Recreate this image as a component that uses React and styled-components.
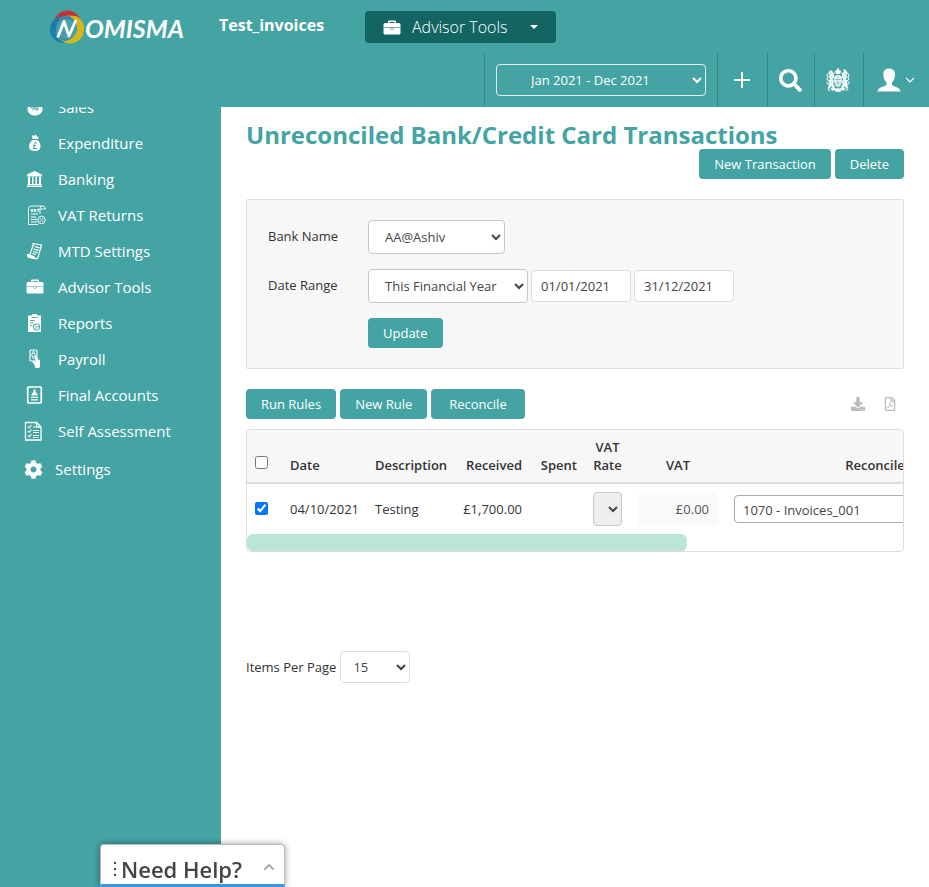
import React from 'react';
import styled, { createGlobalStyle } from 'styled-components';
import { FaDownload, FaRegFilePdf, FaChevronUp, FaCog, FaSearch } from 'react-icons/fa';

const teal = '#44a3a3';
const line = '#2f8c8c';

const GlobalStyle = createGlobalStyle`
  *, *::before, *::after { box-sizing: border-box; }
  body {
    margin: 0;
    background: #fff;
    color: #333;
    font: 13px/18px "Open Sans", sans-serif;
  }
  button, input, select { font: inherit; }
`;

const Page = styled.div`
  display: flex;
  flex-direction: column;
  height: 100vh;
`;

const Header = styled.header`
  flex: none;
  background: ${teal};
  color: #fff;
`;

const TopRow = styled.div`
  display: flex;
  align-items: center;
  height: 53px;
  padding-left: 48px;
`;

const LogoLink = styled.a`
  display: flex;
  width: 171px;
  flex: none;
`;

const Company = styled.span`
  width: 146px;
  font-size: 16px;
  font-weight: 700;
  line-height: 22px;
  padding-bottom: 4px;
`;

const AdvisorButton = styled.button`
  display: flex;
  align-items: center;
  gap: 11px;
  height: 32px;
  padding: 0 18px;
  border: 0;
  border-radius: 4px;
  background: #136564;
  color: #fff;
  font-size: 16px;
  font-weight: 300;
`;

const Caret = styled.span`
  margin-left: 11px;
  border: 4px solid transparent;
  border-top-color: #fff;
  border-bottom: 0;
`;

const BottomRow = styled.div`
  display: flex;
  justify-content: flex-end;
  height: 54px;
`;

const PeriodCell = styled.div`
  display: flex;
  align-items: center;
  width: 233px;
  padding: 0 11px;
  border-left: 1px solid ${line};
`;

const PeriodSelect = styled.select`
  width: 100%;
  height: 32px;
  padding: 0 0 0 30px;
  border: 1px solid #e3f1f1;
  border-radius: 4px;
  background: ${teal};
  color: #fff;
`;

const HeaderButton = styled.button`
  display: flex;
  align-items: center;
  justify-content: center;
  gap: 4px;
  width: ${(p) => p.$width}px;
  padding: 0 2px 0 0;
  border: 0;
  border-left: 1px solid ${line};
  background: none;
  color: #fff;
`;

const Body = styled.div`
  display: flex;
  flex: 1;
  min-height: 0;
`;

const Sidebar = styled.nav`
  flex: none;
  width: 221px;
  overflow: hidden;
  background: ${teal};
`;

const MenuList = styled.ul`
  list-style: none;
  margin: -18px 0 0;
  padding: 0;
`;

const MenuLink = styled.a`
  display: flex;
  align-items: center;
  gap: 12px;
  height: ${(p) => (p.$tall ? 40 : 36)}px;
  padding-left: 24px;
  color: #fff;
  font-size: 15px;
  line-height: 20px;
  text-decoration: none;
`;

const Glyph = styled.svg`
  flex: none;
  display: block;
  width: ${(p) => p.$size || 22}px;
  height: ${(p) => p.$size || 22}px;
`;

const Main = styled.main`
  flex: 1;
  min-width: 0;
  padding: 12px 25px 0;
  overflow: hidden;
`;

const Title = styled.h1`
  margin: 0;
  color: ${teal};
  font-size: 24px;
  font-weight: 700;
  line-height: 32px;
`;

const Actions = styled.div`
  display: flex;
  gap: 4px;
  justify-content: ${(p) => (p.$end ? 'flex-end' : 'flex-start')};
  align-items: center;
`;

const Heading = styled.div`
  display: flex;
  flex-direction: column;

  ${Actions} { margin-top: -2px; }
`;

const Button = styled.button`
  height: 30px;
  padding: 0 ${(p) => (p.$wide ? 18 : 15)}px;
  border: 0;
  border-radius: 4px;
  background: ${teal};
  color: #fff;
  white-space: nowrap;
`;

const Filter = styled.form`
  display: flex;
  flex-direction: column;
  gap: 15px;
  margin: 20px 0;
  padding: 20px 21px;
  border: 1px solid #ddd;
  border-radius: 2px;
  background: #f7f7f7;
`;

const FilterRow = styled.div`
  display: grid;
  grid-template-columns: 100px 1fr;
  align-items: center;
`;

const FieldLabel = styled.label`
  padding-bottom: 2px;
`;

const Fields = styled.div`
  display: flex;
  align-items: center;
  gap: 3px;
  grid-column: 2;
`;

const Select = styled.select`
  width: ${(p) => p.$width}px;
  height: ${(p) => p.$height || 34}px;
  padding: 0 0 0 ${(p) => (p.$tight ? 8 : 12)}px;
  border: 1px solid ${(p) => (p.$soft ? '#ddd' : '#c8c8c8')};
  border-radius: 4px;
  background: #fff;
  color: #444;

  &:disabled {
    background: #eee;
    color: #444;
    opacity: 1;
  }
`;

const DateInput = styled.input`
  width: 100px;
  height: 32px;
  padding: 0 9px;
  border: 1px solid #ddd;
  border-radius: 4px;
  background: #fff;
  color: #444;
`;

const Toolbar = styled.div`
  display: flex;
  align-items: center;
  justify-content: space-between;
  margin-bottom: 10px;
`;

const Exports = styled.div`
  display: flex;
  gap: 18px;
  padding-right: 7px;
`;

const ExportButton = styled.button`
  display: flex;
  padding: 0;
  border: 0;
  background: none;
  color: #bbb;
  font-size: 14px;
`;

const TableBox = styled.div`
  overflow: hidden;
  border: 1px solid #ddd;
  border-radius: 4px;
`;

const Table = styled.table`
  width: 981px;
  table-layout: fixed;
  border-collapse: collapse;
`;

const Th = styled.th`
  height: 53px;
  padding: 8px;
  border-bottom: 2px solid #ddd;
  background: #f7f7f7;
  font-weight: 600;
  text-align: ${(p) => p.$align || 'left'};
  vertical-align: bottom;
`;

const Td = styled.td`
  height: 50px;
  padding: 0 8px;
  text-align: ${(p) => p.$align || 'left'};
  vertical-align: middle;
`;

const Check = styled.input`
  display: block;
  width: 13px;
  height: 13px;
  margin: 0 0 ${(p) => (p.$head ? 5 : 0)}px;
`;

const AmountInput = styled.input`
  display: block;
  width: 100%;
  height: 32px;
  padding: 0 9px;
  border: 0;
  border-radius: 4px;
  background: #f9f9f9;
  color: #555;
  text-align: right;
`;

const AccountInput = styled.input`
  display: block;
  width: 100%;
  height: 28px;
  padding: 2px 8px 0;
  border: 1px solid #aaa;
  border-radius: 4px;
  color: #444;
`;

const ScrollThumb = styled.div`
  width: 67%;
  height: 17px;
  margin-top: 1px;
  border-radius: 6px;
  background: #bae5d8;
`;

const Pager = styled.div`
  display: flex;
  align-items: center;
  gap: 4px;
  margin-top: 99px;
`;

const Help = styled.button`
  position: fixed;
  left: 100px;
  bottom: 0;
  display: flex;
  align-items: center;
  width: 185px;
  height: 43px;
  padding: 8px 9px 0 12px;
  border: 1px solid #bbb;
  border-bottom: 3px solid #3b99d8;
  border-radius: 4px 4px 0 0;
  background: #fff;
  box-shadow: 0 0 6px rgba(0, 0, 0, 0.4);
  color: #444;
  font-size: 22px;
  font-weight: 600;
  line-height: 30px;
  white-space: nowrap;

  > svg:last-child { margin-bottom: 4px; }
`;

const HelpText = styled.span`
  flex: 1;
  padding-left: 4px;
  text-align: left;
`;

function Logo() {
  return (
    <svg width="140" height="40" viewBox="0 0 140 40" role="img" aria-label="Nomisma">
      <circle cx="19.500" cy="17" r="13.500" fill="#bd3338" />
      <circle cx="15.500" cy="22.500" r="13.500" fill="#157cb0" opacity="0.94" />
      <circle cx="22" cy="22.500" r="14" fill="#c9bd20" />
      <path d="M11 12C14 9 20 8 24 9C20 10 14 13 11 18Z" fill="#dd6a23" />
      <path d="M13 11A14 14 0 0 0 15 34A14 14 0 0 0 29 22A14 14 0 0 0 21 9A14 14 0 0 0 13 11Z" fill="#3c87b1" />
      <circle cx="18.500" cy="22" r="10" fill="#46a0b0" />
      <path d="M22 9A14 14 0 0 1 30 26A14 14 0 0 1 25 34A14 14 0 0 0 36 21A14 14 0 0 0 28 9Z" fill="#d8b51d" />
      <path d="M10 29.500L16 14.500L21 29L27.500 14" fill="none" stroke="#fff" strokeWidth="2.800" strokeLinecap="round" strokeLinejoin="round" />
      <text x="37" y="31" fill="#fff" fontFamily="Lato, sans-serif" fontSize="25" fontWeight="700" fontStyle="italic">OMISMA</text>
    </svg>
  );
}

function Briefcase({ cut = teal, size }) {
  return (
    <Glyph $size={size} viewBox={size ? '2 1 18 18' : '0 0 22 22'} fill="#fff" aria-hidden="true">
      <path d="M7 6V4.500Q7 3.500 8 3.500H14Q15 3.500 15 4.500V6H18Q19.500 6 19.500 7.500V10.500H2.500V7.500Q2.500 6 4 6ZM8.500 6H13.500V5H8.500Z" fillRule="evenodd" />
      <path d="M2.500 11.100H19.500V16Q19.500 17.500 18 17.500H4Q2.500 17.500 2.500 16Z" />
      <path d="M9.500 10.500H12.500V11.500Q12.500 12.500 11 12.500Q9.500 12.500 9.500 11.500Z" fill="#fff" stroke={cut} strokeWidth="0.500" />
    </Glyph>
  );
}

function Crest() {
  return (
    <Glyph $size={26} viewBox="0 0 26 26" fill="#fff" aria-hidden="true">
      <path d="M12.300 1H13.700V3H15L16 4.500L15 7H11L10 4.500L11 3H12.300Z" />
      <path d="M13 8C16.500 8 17.500 10.500 17 14C16.500 17.500 15 19.500 13 20.500C11 19.500 9.500 17.500 9 14C8.500 10.500 9.500 8 13 8Z" opacity="0.9" />
      <path d="M9.500 12.500H16.500M10 16H16M13 9V20" stroke={teal} strokeWidth="0.500" />
      <g stroke="#fff" strokeWidth="0.600" strokeLinejoin="round">
        <path d="M5 4L6.500 3.500L8 6L9 9L8.500 11L7 12L8.500 14L8 17L9.500 20L8 21L6 18.500L4.500 21.500L3 21L4.500 17L4 14.500L5.500 12L4 10L5 8L3.500 6Z" />
        <path d="M21 4L19.500 2L18.500 5.500L17 9L17.500 11L19 12L17.500 14L18 17L16.500 20L18 21L20 18.500L21.500 21.500L23 21L21.500 17L22 14.500L20.500 12L22 10L21 8L22.500 6Z" />
        <path d="M6 21.500L9 20.500L11 22L13 21.500L15 22L17 20.500L20 21.500L18.500 23.500L15.500 22.500V24.500H10.500V22.500L7.500 23.500Z" />
      </g>
      <g fill="none" stroke="#fff" strokeWidth="1" strokeLinecap="round">
        <path d="M4.500 14L2 12.500L3 10L1.800 8L3 6.500M4 17.500L2 16.500V15M3 22.500L5 23.500M6.500 7.500L9.500 6" />
        <path d="M21.500 14L24 12.500L23 10L24.200 8L23 6.500M22 17.500L24 16.500V15M23 22.500L21 23.500M19.500 7.500L16.500 6" />
      </g>
      <path d="M5.500 9.500L7.500 9M6 15L7.500 14.500M18.500 9L20.500 9.500M18.500 14.500L20 15M5 6.500H6.500M19.500 6.500H21" stroke={teal} strokeWidth="0.600" />
    </Glyph>
  );
}

function PersonIcon() {
  return (
    <Glyph $size={24} viewBox="0 0 24 24" fill="#fff" aria-hidden="true">
      <path d="M12 0.500C16 0.500 18 3 18 6.500C18 10 17 12.500 15 14.500V17C17 18.800 23 19 23.500 23.500H0.500C1 19 7 18.800 9.500 17V14.500C7.500 12.500 6.300 10 6.300 6.500C6.300 3 8 0.500 12 0.500Z" />
    </Glyph>
  );
}

const icons = {
  sales: (
    <Glyph viewBox="0 0 22 22" aria-hidden="true">
      <path d="M7 1H15L13 5C17 7 18.500 10 18.500 13C18.500 17 15 19.500 11 19.500C7 19.500 3.500 17 3.500 13C3.500 10 5 7 9 5Z" fill="#fff" />
      <path d="M8.500 14.500L13 9.500" stroke={teal} strokeWidth="1" />
      <circle cx="8.500" cy="11" r="1.300" fill="none" stroke={teal} />
      <circle cx="13" cy="13" r="1.300" fill="none" stroke={teal} />
    </Glyph>
  ),
  bag: (
    <Glyph viewBox="0 0 22 22" aria-hidden="true">
      <path d="M8 3L10 4L11.500 2.500L13 4.500L15 5L13.500 7H8.500ZM8.500 8H13.500C15.500 9.500 16.500 12 16.500 14.500C16.500 17.500 14.500 19 11 19C7 19 5 17.500 5 14.500C5 12 6.500 9.500 8.500 8Z" fill="#fff" />
      <path d="M12.800 11.500C12 10 10 10.500 10 12.300C10.700 14 10.500 15.500 9 16.500H13.300M9 13.700H12.300" fill="none" stroke={teal} strokeWidth="1" />
    </Glyph>
  ),
  bank: (
    <Glyph viewBox="0 0 22 22" fill="#fff" aria-hidden="true">
      <path d="M10.500 3L18 6.500V8.500H3V6.500ZM4 9H6V16H4ZM8 9H9.500V16H8ZM11.500 9H13V16H11.500ZM15 9H17V16H15ZM3.500 16H17.500V17H3.500ZM3 17.500H18V19H3Z" />
    </Glyph>
  ),
  vat: (
    <Glyph viewBox="0 0 22 22" fill="none" stroke="#fff" aria-hidden="true">
      <path d="M16 10V4.500Q16 2 18.500 2Q21.500 2 21.500 5H16M18.500 2H7Q4.500 2 4.500 4.500V20.500H14" strokeWidth="0.900" />
      <path d="M7 5L8 8L9 5M10 8L11 5L12 8M13 5.300H15.500M14.200 5V8M7 10H14" strokeWidth="1" />
      <path d="M7 13H12M7 15.500H13M7 18H13" strokeWidth="1.200" />
      <circle cx="17.500" cy="16" r="3.800" strokeWidth="0.900" />
      <path d="M15.500 18L19.500 14M15.500 15L17 14M18 18L19.500 17" strokeWidth="0.900" />
    </Glyph>
  ),
  mtd: (
    <Glyph viewBox="0 0 22 22" fill="none" stroke="#fff" aria-hidden="true">
      <path d="M8.500 3.500L17.500 5L14 17.500Q13 19.500 10.500 18.500L4 17L3.500 14.500H6L9.500 4Z" strokeWidth="1.200" />
      <path d="M3.500 14.500L10 16.500Q10.500 18.500 12 18.700L5 17.500Z" fill="#fff" />
      <path d="M10.500 6.500L15.500 7.800M9.500 9L14.500 10.300M9 11.500L13.800 12.700M8.300 13.500L12 14.500" strokeWidth="1.200" />
    </Glyph>
  ),
  advisor: <Briefcase />,
  reports: (
    <Glyph viewBox="0 0 22 22" aria-hidden="true">
      <path d="M4 3.500H7.500L8.500 2H12.500L13.500 3.500H17V20H4Z" fill="#fff" />
      <path d="M7.500 5.500H14M6 8.500H10.500M6 11H9.500M6 13.500H8" stroke={teal} strokeWidth="0.900" />
      <circle cx="12.500" cy="15" r="3.200" fill="#fff" stroke={teal} />
      <path d="M10.500 13.500L12.500 15L15 14.500M12.500 15L11.500 17" stroke={teal} strokeWidth="0.800" fill="none" />
    </Glyph>
  ),
  payroll: (
    <Glyph viewBox="0 0 22 22" aria-hidden="true">
      <rect x="6" y="2" width="7" height="11" rx="1" fill="none" stroke="#fff" strokeWidth="1.200" />
      <circle cx="9.500" cy="7" r="1.800" fill="none" stroke="#fff" />
      <path d="M8 10H11M8 4H11" stroke="#fff" />
      <path d="M11 8Q12.500 7.500 13 9.500L14 11.500L16 12V17L15.500 20H11.500L10 16L8 13.500Q8.500 12.200 10 13L12 14.500L11 11Z" fill="#fff" />
    </Glyph>
  ),
  accounts: (
    <Glyph viewBox="0 0 22 22" aria-hidden="true">
      <rect x="3.750" y="3" width="13.500" height="16" rx="1" fill="none" stroke="#fff" strokeWidth="1.700" />
      <path d="M9.500 5.500H11.500V8L13.500 10V11.500H7.500V10L9.500 8Z" fill="#fff" />
      <path d="M7 13.300H14M7 15.800H14" stroke="#fff" strokeWidth="1.300" />
    </Glyph>
  ),
  assessment: (
    <Glyph viewBox="0 0 22 22" fill="none" stroke="#fff" aria-hidden="true">
      <path d="M1.500 2.500H12.500L17 7V20H1.500ZM12.500 2.500V7H17" strokeWidth="1.300" />
      <path d="M4 6.500L5.200 7.800L7.500 5M4 11L5.200 12.300L7.500 9.500M4 15.500L5.200 16.800L7.500 14" strokeWidth="1.100" />
      <path d="M9 7H11.500M9 10.500H15M9 12.500H15M9 15.500H15M9 17.500H14" strokeWidth="1.200" />
    </Glyph>
  ),
  settings: <FaCog size={19} aria-hidden="true" />,
};

const menu = [
  ['sales', 'Sales'],
  ['bag', 'Expenditure'],
  ['bank', 'Banking'],
  ['vat', 'VAT Returns'],
  ['mtd', 'MTD Settings'],
  ['advisor', 'Advisor Tools'],
  ['reports', 'Reports'],
  ['payroll', 'Payroll'],
  ['accounts', 'Final Accounts'],
  ['assessment', 'Self Assessment'],
  ['settings', 'Settings'],
];

const columnWidths = [35, 85, 88, 75, 55, 45, 96, 298, 204];

function SiteHeader() {
  return (
    <Header>
      <TopRow>
        <LogoLink href="#home"><Logo /></LogoLink>
        <Company>Test_invoices</Company>
        <AdvisorButton type="button">
          <Briefcase cut="#136564" size={18} />
          Advisor Tools
          <Caret />
        </AdvisorButton>
      </TopRow>
      <BottomRow>
        <PeriodCell>
          <PeriodSelect aria-label="Accounting period">
            <option>Jan 2021 - Dec 2021</option>
          </PeriodSelect>
        </PeriodCell>
        <HeaderButton type="button" $width={50} aria-label="Add">
          <Glyph $size={16} viewBox="0 0 16 16" aria-hidden="true">
            <path d="M8 0V16M0 8H16" stroke="#fff" strokeWidth="2" />
          </Glyph>
        </HeaderButton>
        <HeaderButton type="button" $width={47} aria-label="Search">
          <FaSearch size={23} />
        </HeaderButton>
        <HeaderButton type="button" $width={49} aria-label="HMRC">
          <Crest />
        </HeaderButton>
        <HeaderButton type="button" $width={66} aria-label="Account">
          <PersonIcon />
          <Glyph $size={10} viewBox="0 0 10 10" fill="none" aria-hidden="true">
            <path d="M1 3L5 7L9 3" stroke="#fff" strokeWidth="1.200" />
          </Glyph>
        </HeaderButton>
      </BottomRow>
    </Header>
  );
}

function FilterForm() {
  return (
    <Filter>
      <FilterRow>
        <FieldLabel htmlFor="bank">Bank Name</FieldLabel>
        <Fields>
          <Select id="bank" $width={137}><option>AA@Ashiv</option></Select>
        </Fields>
      </FilterRow>
      <FilterRow>
        <FieldLabel htmlFor="range">Date Range</FieldLabel>
        <Fields>
          <Select id="range" $width={160}><option>This Financial Year</option></Select>
          <DateInput aria-label="From" defaultValue="01/01/2021" />
          <DateInput aria-label="To" defaultValue="31/12/2021" />
        </Fields>
      </FilterRow>
      <FilterRow>
        <Fields><Button type="button">Update</Button></Fields>
      </FilterRow>
    </Filter>
  );
}

function Transactions() {
  return (
    <TableBox>
      <Table>
        <colgroup>
          {columnWidths.map((width, i) => <col key={i} width={width} />)}
        </colgroup>
        <thead>
          <tr>
            <Th><Check $head type="checkbox" aria-label="Select all" /></Th>
            <Th>Date</Th>
            <Th>Description</Th>
            <Th $align="right">Received</Th>
            <Th $align="right">Spent</Th>
            <Th $align="center">VAT Rate</Th>
            <Th $align="center">VAT</Th>
            <Th $align="center">Reconcile</Th>
            <Th />
          </tr>
        </thead>
        <tbody>
          <tr>
            <Td><Check type="checkbox" defaultChecked aria-label="Select transaction" /></Td>
            <Td>04/10/2021</Td>
            <Td>Testing</Td>
            <Td $align="right">£1,700.00</Td>
            <Td />
            <Td><Select $width={29} $tight disabled aria-label="VAT rate"><option /></Select></Td>
            <Td><AmountInput aria-label="VAT" defaultValue="£0.00" /></Td>
            <Td><AccountInput aria-label="Reconcile account" defaultValue="1070 - Invoices_001" /></Td>
            <Td />
          </tr>
        </tbody>
      </Table>
      <ScrollThumb />
    </TableBox>
  );
}

export default function App() {
  return (
    <Page>
      <GlobalStyle />
      <SiteHeader />
      <Body>
        <Sidebar>
          <MenuList>
            {menu.map(([icon, label]) => (
              <li key={icon}>
                <MenuLink href={`#${icon}`} $tall={icon === 'settings'}>
                  {icons[icon]}
                  {label}
                </MenuLink>
              </li>
            ))}
          </MenuList>
        </Sidebar>
        <Main>
          <Heading>
            <Title>Unreconciled Bank/Credit Card Transactions</Title>
            <Actions $end>
              <Button type="button">New Transaction</Button>
              <Button type="button">Delete</Button>
            </Actions>
          </Heading>
          <FilterForm />
          <Toolbar>
            <Actions>
              <Button type="button">Run Rules</Button>
              <Button type="button">New Rule</Button>
              <Button type="button" $wide>Reconcile</Button>
            </Actions>
            <Exports>
              <ExportButton type="button" aria-label="Download"><FaDownload /></ExportButton>
              <ExportButton type="button" aria-label="Export PDF"><FaRegFilePdf /></ExportButton>
            </Exports>
          </Toolbar>
          <Transactions />
          <Pager>
            <label htmlFor="perPage">Items Per Page</label>
            <Select id="perPage" $width={70} $height={32} $tight $soft><option>15</option></Select>
          </Pager>
        </Main>
      </Body>
      <Help type="button">
        <Glyph $size={4} viewBox="0 0 4 4" overflow="visible" fill="#444" aria-hidden="true">
          <path d="M1 -5H3V-3H1ZM1 1H3V3H1ZM1 7H3V9H1Z" />
        </Glyph>
        <HelpText>Need Help?</HelpText>
        <FaChevronUp size={12} color="#aaa" />
      </Help>
    </Page>
  );
}
